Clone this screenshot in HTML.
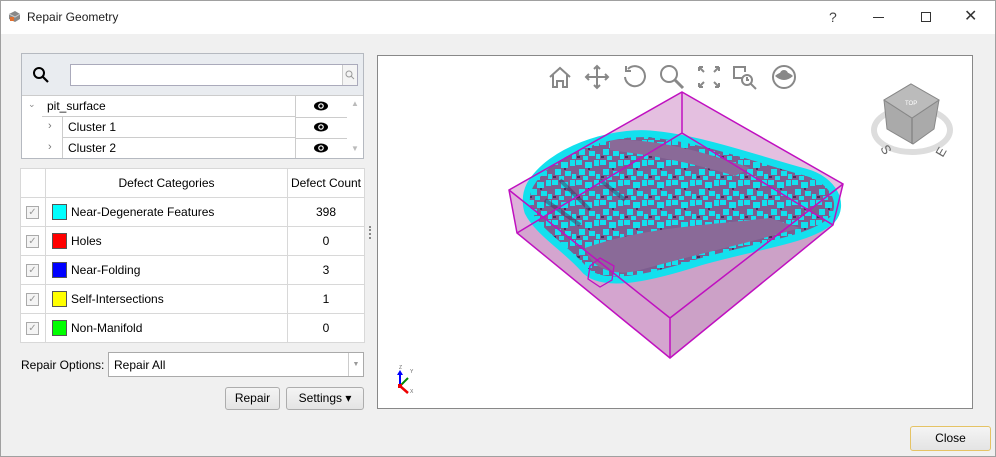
<!DOCTYPE html>
<html><head><style>
*{margin:0;padding:0;box-sizing:border-box}
body{width:996px;height:457px;background:#f0f0f0;font-family:"Liberation Sans",sans-serif;font-size:12px;color:#000;position:relative;overflow:hidden}
.a{position:absolute}
.frame{left:0;top:0;width:996px;height:457px;border:1px solid #a0a0a0;pointer-events:none}
.title{left:0;top:0;width:996px;height:34px;background:#fff}
.cell{position:absolute;border-right:1px solid #d8d8d8;border-bottom:1px solid #d8d8d8;height:29px;line-height:28px}
.cb{position:absolute;left:5px;top:8px;width:13px;height:13px;border:1px solid #aaa;background:#f4f4f4;font-size:10px;line-height:11px;text-align:center;color:#999}
.sw{position:absolute;left:6px;top:6px;width:15px;height:16px;border:1px solid #555}
.btn{position:absolute;border:1px solid #adadad;border-radius:3px;background:linear-gradient(#f4f4f4,#e4e4e4);text-align:center;line-height:21px}
</style></head><body>
<div class="a title">
<svg class="a" style="left:8px;top:10px" width="13" height="13"><path d="M1 4l6-3 5 3v5l-5 3-6-3z" fill="#888"/><path d="M1 4l6 3 5-3" stroke="#ccc" fill="none"/><rect x="2" y="7" width="4" height="4" fill="#e07030"/></svg>
<div class="a" style="left:27px;top:10px;font-size:12px;color:#222">Repair Geometry</div>
<div class="a" style="left:829px;top:9px;font-size:14px;color:#444">?</div>
<div class="a" style="left:873px;top:17px;width:11px;height:1px;background:#333"></div>
<div class="a" style="left:921px;top:12px;width:10px;height:10px;border:1px solid #333"></div>
<div class="a" style="left:964px;top:6px;font-size:16px;color:#333">✕</div>
</div>

<div class="a" style="left:21px;top:53px;width:343px;height:106px;border:1px solid #b5b9c0;background:#fff">
<div class="a" style="left:0;top:0;width:341px;height:42px;background:#e9ecf0;border-bottom:1px solid #ccc"></div>
<svg class="a" style="left:10px;top:12px" width="18" height="18"><circle cx="7" cy="7" r="5" stroke="#000" stroke-width="2" fill="none"/><path d="M11 11l5 5" stroke="#000" stroke-width="2.2"/></svg>
<div class="a" style="left:48px;top:10px;width:288px;height:22px;border:1px solid #aab;background:#fff"></div>
<div class="a" style="left:320px;top:11px;width:15px;height:20px;border-left:1px solid #ccc;background:#f4f4f4"></div>
<svg class="a" style="left:322px;top:15px" width="12" height="12"><circle cx="5" cy="5" r="3" stroke="#999" fill="none"/><path d="M7 7l3 3" stroke="#999"/></svg>
<div class="a" style="left:6px;top:45px;color:#888;font-size:9px">⌄</div>
<div class="a" style="left:20px;top:42px;width:254px;height:21px;border-right:1px solid #ccc;border-bottom:1px solid #ccc;padding:3px 5px">pit_surface</div>
<div class="a" style="left:26px;top:66px;color:#777;font-size:11px">›</div>
<div class="a" style="left:40px;top:63px;width:234px;height:21px;border-right:1px solid #ccc;border-bottom:1px solid #ccc;border-left:1px solid #ccc;padding:3px 5px">Cluster 1</div>
<div class="a" style="left:26px;top:87px;color:#777;font-size:11px">›</div>
<div class="a" style="left:40px;top:84px;width:234px;height:20px;border-right:1px solid #ccc;border-left:1px solid #ccc;padding:3px 5px">Cluster 2</div>
<div class="a" style="left:274px;top:63px;width:51px;height:1px;background:#ccc"></div>
<div class="a" style="left:274px;top:84px;width:51px;height:1px;background:#ccc"></div>
<svg class="a" style="left:291px;top:46px" width="16" height="58"><g fill="#000"><ellipse cx="8" cy="6" rx="7" ry="4.5"/><ellipse cx="8" cy="27" rx="7" ry="4.5"/><ellipse cx="8" cy="48" rx="7" ry="4.5"/></g><g fill="#fff"><circle cx="8" cy="6" r="2.8"/><circle cx="8" cy="27" r="2.8"/><circle cx="8" cy="48" r="2.8"/></g><g fill="#000"><circle cx="8" cy="6" r="1.6"/><circle cx="8" cy="27" r="1.6"/><circle cx="8" cy="48" r="1.6"/></g></svg>
<div class="a" style="left:329px;top:45px;color:#bbb;font-size:8px">▲</div>
<div class="a" style="left:329px;top:90px;color:#bbb;font-size:8px">▼</div>
</div>

<div class="a" style="left:20px;top:168px;width:345px;height:175px;background:#fff;border-left:1px solid #d8d8d8;border-top:1px solid #d8d8d8">
<div class="cell" style="left:0;top:0;width:25px"></div>
<div class="cell" style="left:25px;top:0;width:242px;text-align:center">Defect Categories</div>
<div class="cell" style="left:267px;top:0;width:77px;text-align:center">Defect Count</div>
<div class="cell" style="left:0;top:29px;width:25px"><div class="cb">✓</div></div>
<div class="cell" style="left:25px;top:29px;width:242px;padding-left:25px"><div class="sw" style="background:#0ff"></div>Near-Degenerate Features</div>
<div class="cell" style="left:267px;top:29px;width:77px;text-align:center">398</div>
<div class="cell" style="left:0;top:58px;width:25px"><div class="cb">✓</div></div>
<div class="cell" style="left:25px;top:58px;width:242px;padding-left:25px"><div class="sw" style="background:#f00"></div>Holes</div>
<div class="cell" style="left:267px;top:58px;width:77px;text-align:center">0</div>
<div class="cell" style="left:0;top:87px;width:25px"><div class="cb">✓</div></div>
<div class="cell" style="left:25px;top:87px;width:242px;padding-left:25px"><div class="sw" style="background:#00f"></div>Near-Folding</div>
<div class="cell" style="left:267px;top:87px;width:77px;text-align:center">3</div>
<div class="cell" style="left:0;top:116px;width:25px"><div class="cb">✓</div></div>
<div class="cell" style="left:25px;top:116px;width:242px;padding-left:25px"><div class="sw" style="background:#ff0"></div>Self-Intersections</div>
<div class="cell" style="left:267px;top:116px;width:77px;text-align:center">1</div>
<div class="cell" style="left:0;top:145px;width:25px"><div class="cb">✓</div></div>
<div class="cell" style="left:25px;top:145px;width:242px;padding-left:25px"><div class="sw" style="background:#0f0"></div>Non-Manifold</div>
<div class="cell" style="left:267px;top:145px;width:77px;text-align:center">0</div>
</div>
<div class="a" style="left:369px;top:226px;width:2px;height:13px;border-left:2px dotted #888"></div>

<div class="a" style="left:21px;top:358px">Repair Options:</div>
<div class="a" style="left:108px;top:352px;width:256px;height:25px;border:1px solid #aaa;background:#fff;padding:5px 5px">Repair All</div>
<div class="a" style="left:348px;top:353px;width:15px;height:23px;border-left:1px solid #ccc;color:#999;font-size:7px;text-align:center;line-height:23px">▼</div>
<div class="btn" style="left:225px;top:387px;width:55px;height:23px">Repair</div>
<div class="btn" style="left:286px;top:387px;width:78px;height:23px">Settings ▾</div>

<div class="a" style="left:377px;top:55px;width:596px;height:354px;border:1px solid #888;background:#fff"></div>
<svg class="a" style="left:0;top:0" width="996" height="457">
<defs>
<pattern id="p" width="24" height="20" patternUnits="userSpaceOnUse">
<rect width="24" height="20" fill="#7d5d8f"/>
<rect x="0" y="0" width="6" height="5" fill="#13e0ee"/><rect x="9" y="2" width="7" height="6" fill="#13e0ee"/>
<rect x="18" y="0" width="5" height="6" fill="#13e0ee"/><rect x="3" y="9" width="6" height="6" fill="#13e0ee"/>
<rect x="13" y="11" width="6" height="5" fill="#13e0ee"/><rect x="20" y="14" width="4" height="5" fill="#13e0ee"/>
<rect x="7" y="16" width="5" height="4" fill="#13e0ee"/>
<rect x="12" y="8" width="2" height="2" fill="#4a2e5c"/><rect x="1" y="16" width="3" height="2" fill="#4a2e5c"/>
</pattern>
<clipPath id="c"><path d="M530 185C550 150 610 131 650 134C700 138 760 160 805 172C835 180 845 205 832 220C810 240 760 245 700 262C650 278 600 290 583 268C565 248 538 232 528 212C525 202 526 193 530 185z"/></clipPath>
</defs>
<g stroke="#888" stroke-width="2" fill="none">
<path d="M550 77l10-9 10 9M553 75v12h4v-6h6v6h4v-12"/>
<path d="M597 66v22M586 77h22M594 69l3-3 3 3M594 85l3 3 3-3M589 74l-3 3 3 3M605 74l3 3-3 3"/>
<path d="M628 69a10 10 0 1 1-3 8M626 66v5h5"/>
<circle cx="669" cy="74" r="8"/><path d="M675 80l8 8" stroke-width="3"/>
<path d="M699 67l5 5M699 67h4M699 67v4M719 67l-5 5M719 67h-4M719 67v4M699 87l5-5M699 87h4M699 87v-4M719 87l-5-5M719 87h-4M719 87v-4"/>
<path d="M742 78h-8v-11h11v5"/><circle cx="747" cy="80" r="5"/><path d="M751 84l5 5M747 77v3h2"/>
<circle cx="784" cy="77" r="11"/>
</g>
<path d="M775 76q9-8 18 0q-9 8-18 0z" fill="#888"/><circle cx="784" cy="74" r="4" fill="#888"/>
<ellipse cx="912" cy="130" rx="38" ry="22" fill="none" stroke="#ddd" stroke-width="6"/>
<path d="M911 84l28 16-5 29-21 15-26-15-3-29z" fill="#aaa" stroke="#888"/>
<path d="M884 100l28 18 27-18M912 118v26" stroke="#777" fill="none"/>
<path d="M884 100l27-16 28 16-27 18z" fill="#bbb" stroke="#888"/>
<text x="905" y="105" font-size="6" fill="#fff">TOP</text>
<text x="880" y="148" font-size="13" fill="#666" transform="rotate(60 880 148)">S</text>
<text x="937" y="152" font-size="13" fill="#666" transform="rotate(-60 945 150)">E</text>
<path d="M682 92L843 184 833 225 670 358 517 233 509 190z" fill="#e4bfe0"/>
<path d="M682 133L833 225 670 358 517 233z" fill="#c59ac0" opacity=".8"/>
<path d="M517 233L670 358 670 318 509 190z" fill="#d8a9d3" opacity=".6"/>
<g clip-path="url(#c)">
<rect x="520" y="125" width="330" height="170" fill="url(#p)"/>
<path d="M585 248C640 228 700 226 770 218L800 228C740 245 690 256 640 270C610 278 590 266 585 248z" fill="#8a6a98"/>
<path d="M610 140C650 138 700 150 750 168L735 176C690 162 650 155 610 150z" fill="#8a6a98"/>
<path d="M545 200l35 25M560 180l30 30M600 180l25 20" stroke="#4a2e5c" stroke-width="4" opacity=".5"/>
</g>
<path d="M530 185C550 150 610 131 650 134C700 138 760 160 805 172C835 180 845 205 832 220C810 240 760 245 700 262C650 278 600 290 583 268C565 248 538 232 528 212C525 202 526 193 530 185z" fill="none" stroke="#13e0ee" stroke-width="7"/>
<path d="M600 258l14 8 -2 14-12 7-12-8 2-13z" fill="none" stroke="#c010c0" stroke-width="1.3"/>
<g stroke="#c010c0" stroke-width="1.5" fill="none">
<path d="M682 92L843 184 833 225 670 358 517 233 509 190z"/>
<path d="M509 190L670 318 843 184M670 318V358M682 92V133L517 233M682 133L833 225"/>
</g>
<path d="M400 386v-13" stroke="#00f" stroke-width="2"/><path d="M397 375l3-5 3 5z" fill="#00f"/>
<path d="M400 386l8-8" stroke="#080" stroke-width="2"/>
<path d="M400 386l8 7" stroke="#e00" stroke-width="2.5"/>
<rect x="398" y="384" width="4" height="4" fill="#e00"/>
<text x="399" y="369" font-size="5" fill="#666">Z</text><text x="410" y="373" font-size="5" fill="#666">Y</text><text x="410" y="393" font-size="5" fill="#666">X</text>
</svg>

<div class="btn" style="left:910px;top:426px;width:81px;height:25px;line-height:23px;border-color:#e5c365;border-width:1.5px">Close</div>
<div class="a frame"></div>
</body></html>
